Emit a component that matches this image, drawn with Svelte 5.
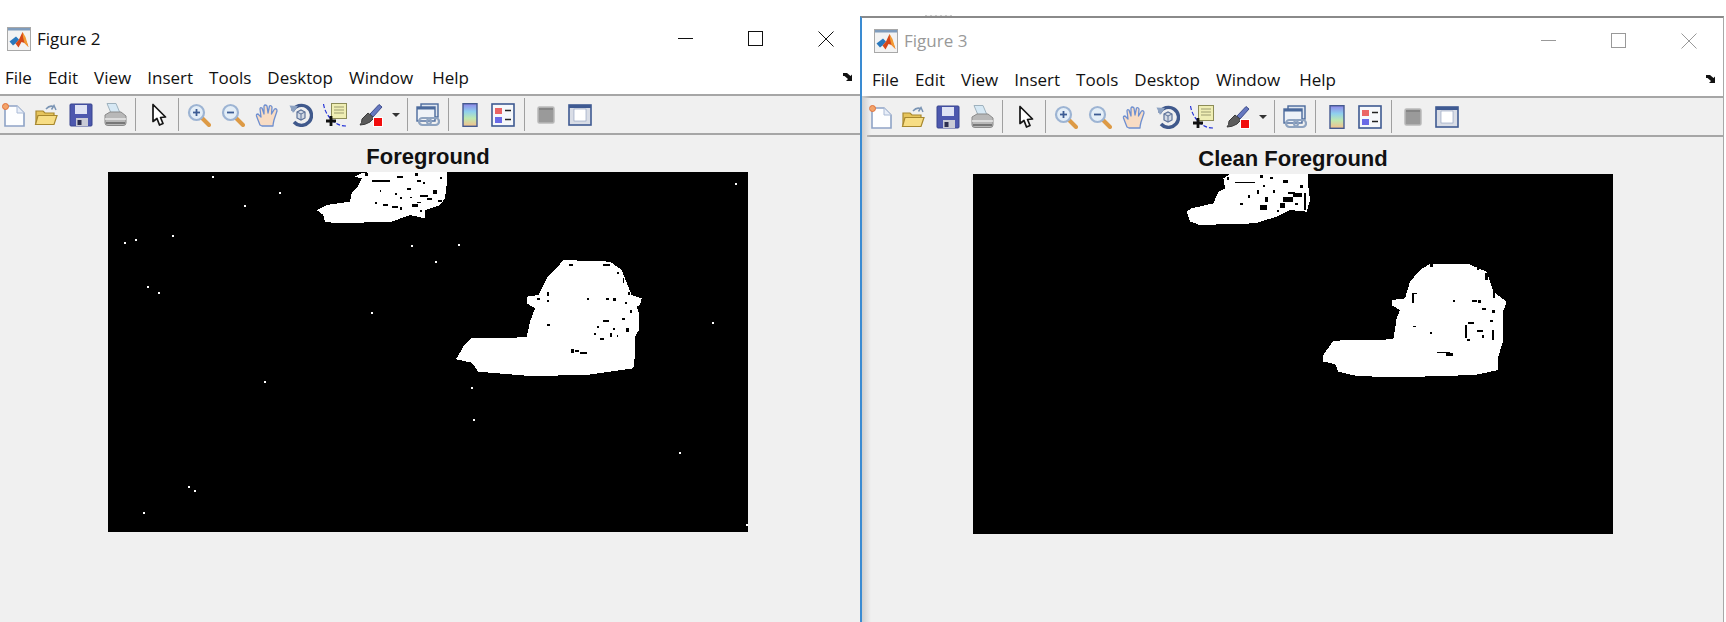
<script lang="ts">
// Two MATLAB figure windows side by side. Masks are traced from 3x crops,
// so `traced` brings crop coordinates back to the 640x360 plot.
type Box = number[];

const menus = ["File", "Edit", "View", "Insert", "Tools", "Desktop", "Window", "Help"];

const tools = [
  { icon: "new", w: 28 },
  { icon: "open", w: 36 },
  { icon: "save", w: 34 },
  { icon: "print", w: 34 },
  { sep: [3, 6] },
  { icon: "pointer", w: 34 },
  { sep: [2, 3] },
  { icon: "zoomIn", w: 34 },
  { icon: "zoomOut", w: 34 },
  { icon: "hand", w: 34 },
  { icon: "rotate", w: 34 },
  { icon: "cursor", w: 34 },
  { icon: "brush", w: 38 },
  { icon: "drop", w: 12 },
  { sep: [5, 4] },
  { icon: "link", w: 32 },
  { sep: [4, 4] },
  { icon: "colorbar", w: 34 },
  { icon: "legend", w: 32 },
  { sep: [5, 4] },
  { icon: "gray", w: 34 },
  { icon: "frame", w: 34 },
];

function points(pts: number[], ox: number, oy: number) {
  let out = [];
  for (let i = 0; i < pts.length; i += 2) {
    out.push(`${ox + pts[i] / 3},${oy + pts[i + 1] / 3}`);
  }
  return out.join(" ");
}

function traced(holes: Box[], ox: number, oy: number) {
  return holes.map(([x, y, w, h]) => ({ x: ox + x / 3, y: oy + y / 3, w: w / 3, h: h / 3 }));
}

const firstMask = {
  blobs: [
    points([165,35,185,25,210,21,440,21,440,60,435,100,420,120,375,135,375,160,330,150,275,170,110,175,75,170,70,150,50,135,80,120,150,110,155,85,170,70,185,40], 192, -7),
    points([370,30,510,35,545,60,565,110,575,135,605,145,600,165,590,170,597,190,597,240,585,260,585,315,580,355,440,375,270,378,115,365,95,338,48,328,70,290,95,265,260,262,270,215,285,175,260,160,260,140,295,135,320,85,345,60], 332, 78),
  ],
  holes: [
    ...traced([[215,45,55,5],[290,33,20,5],[345,25,8,8],[195,25,10,8],[350,45,12,6],[320,70,12,6],[360,90,25,6],[380,100,15,5],[400,75,10,12],[250,118,15,6],[275,122,20,8],[335,118,20,8],[300,95,6,6],[225,112,6,6],[240,75,4,6],[370,50,6,6],[420,35,6,6],[415,105,10,5],[300,125,6,10],[360,135,6,5],[285,85,5,5],[330,95,5,5],[350,110,12,5]], 192, -7),
    ...traced([[388,42,10,6],[490,42,20,6],[530,65,8,6],[548,85,4,14],[320,125,8,14],[290,145,10,5],[320,150,8,6],[440,143,8,8],[498,145,10,5],[520,145,8,8],[556,155,6,8],[490,210,18,6],[320,222,10,6],[470,228,8,6],[518,235,8,6],[558,235,10,10],[462,250,6,6],[480,265,12,4],[510,250,5,10],[530,255,5,5],[392,298,10,10],[405,300,12,5],[420,305,20,8],[570,180,6,10],[545,205,10,5],[565,125,5,10]], 332, 78),
  ],
  // stray foreground pixels, only the unfiltered mask has them
  specks: [[104,4],[136,33],[171,20],[627,11],[16,70],[27,67],[64,63],[39,114],[50,120],[263,140],[156,209],[365,247],[363,215],[571,280],[80,314],[86,318],[35,340],[638,352],[604,150],[303,73],[327,89],[350,72]],
};

const secondMask = {
  blobs: [
    points([130,25,150,12,385,12,385,50,390,90,380,125,330,120,290,140,225,160,60,165,30,155,20,125,35,115,100,100,115,65,135,55], 207, -4),
    points([360,42,475,42,530,65,550,125,590,155,585,170,578,185,580,270,565,320,565,360,495,375,260,382,140,378,85,365,75,342,40,335,40,315,70,272,250,268,260,205,270,180,245,165,245,150,285,145,300,95,330,60], 337, 76),
  ],
  holes: [
    ...traced([[165,35,60,5],[240,15,10,10],[270,20,10,8],[310,30,15,8],[310,80,30,15],[340,70,25,12],[325,65,20,8],[360,45,8,10],[372,70,6,50],[300,100,15,15],[345,100,10,5],[240,105,20,15],[180,100,10,6],[230,60,6,12],[255,80,8,15],[280,60,6,10],[205,75,5,10],[290,120,6,6],[250,45,6,6],[140,22,8,8]], 207, -4),
    ...traced([[305,130,6,30],[310,128,10,5],[430,150,5,5],[485,150,15,6],[505,150,8,8],[515,175,12,6],[475,215,18,6],[545,180,10,10],[540,210,10,5],[525,70,8,20],[310,228,8,4],[360,245,6,6],[465,225,6,40],[500,240,20,5],[545,240,6,30],[515,255,6,10],[470,268,10,5],[380,305,40,5],[408,310,20,8],[550,125,5,20],[500,55,6,6],[360,42,8,8]], 337, 76),
  ],
  specks: [],
};

const windows = [
  { name: "Figure 2", title: "Foreground", mask: firstMask, inactive: false },
  { name: "Figure 3", title: "Clean Foreground", mask: secondMask, inactive: true },
];
</script>

{#snippet logo()}
  <svg class="logo" viewBox="0 0 24 24" aria-hidden="true">
    <rect x="0.5" y="0.5" width="23" height="23" fill="#f3f3f3" stroke="#a8a8a8" />
    <rect x="1" y="1" width="22" height="2.5" fill="#7f9cbc" />
    <path d="M2.5 14.5 L9 9.5 L12 12.5 L8.5 16.5 L6 18.5 Z" fill="#2a78bd" />
    <path d="M8.5 16.5 L12 12.5 L15.5 5 L18 11 L21.5 20 L17.5 16 L14.5 15 L11.5 20.5 Z" fill="#d5481a" />
    <path d="M15.5 5 L18.5 10 L21.5 20 L17.5 16 L16 10 Z" fill="#f39a33" />
  </svg>
{/snippet}

{#snippet icon(name)}
  <svg class="icon" viewBox="0 0 24 24" aria-hidden="true">
    {#if name === "new"}
      <path d="M3 3 H15 L22 10 V23 H3 Z" fill="#fdfeff" stroke="#8ea3c6" stroke-width="1.6" />
      <path d="M15 3 V10 H22" fill="#e8eef8" stroke="#a9bad6" />
      <circle cx="3.5" cy="3.5" r="3" fill="#f3a46a" stroke="#e0713a" />
    {:else if name === "open"}
      <path d="M2 20 V8 H9 L11 10 H20 V13" fill="#e6c45c" stroke="#a8882e" stroke-width="1.2" />
      <path d="M1.5 21.5 L4 12.5 H23 L20 21.5 Z" fill="#f7dd84" stroke="#a8882e" stroke-width="1.2" />
      <path d="M12 6 Q16 1.5 20 4 M22 7 L20 2.5 L17.5 6.5" fill="none" stroke="#7a94b4" stroke-width="1.5" />
    {:else if name === "save"}
      <rect x="1" y="1" width="22" height="22" rx="1" fill="#4d58ae" stroke="#39458f" />
      <rect x="6" y="2" width="12" height="9" fill="#dfe3f4" />
      <rect x="7" y="15" width="12" height="8" fill="#c9cbd6" />
      <rect x="8.5" y="17" width="4" height="5" fill="#2c2f50" />
    {:else if name === "print"}
      <path d="M4 0.5 H13 L17 10 H8 Z" fill="#d6e8f4" stroke="#9eb1bd" />
      <path d="M2 12 L7 9 H18 L23 13 V20 Q23 22.5 20 22.5 H5 Q2 22.5 2 20 Z" fill="#b8b8b8" stroke="#8a8a8a" />
      <path d="M2 16 H23" stroke="#ececec" stroke-width="1.4" />
      <path d="M3 20 H22" stroke="#787878" stroke-width="2" />
    {:else if name === "pointer"}
      <path d="M6 1.5 V18.5 L10 15.5 L12.5 22 L16 20.5 L13.5 14.5 L18.5 14 Z" fill="#fff" stroke="#151515" stroke-width="1.7" stroke-linejoin="round" />
    {:else if name === "zoomIn" || name === "zoomOut"}
      <path d="M14.5 14.5 L22 22" stroke="#dd9a45" stroke-width="4" stroke-linecap="round" />
      <circle cx="9.5" cy="9.5" r="7.5" fill="#e4eef7" stroke="#9db4d3" stroke-width="2.2" />
      <path d="M6 9.5 H13" stroke="#3d5c94" stroke-width="1.8" />
      {#if name === "zoomIn"}
        <path d="M9.5 6 V13" stroke="#3d5c94" stroke-width="1.8" />
      {/if}
    {:else if name === "hand"}
      <path d="M5 22 Q3 17 1.5 13 Q1 11 3 11 L6 14 L5 6 Q5 4 7 5 L9 11 L9 3 Q10 1 12 3 L13 10 L14.5 3 Q16 2 17 4 L16.5 11 L19.5 6 Q22 5 22 8 L19 17 Q18 21 18 23 H7 Z" fill="#f8dcc4" stroke="#6e8fd0" stroke-width="1.3" stroke-linejoin="round" />
    {:else if name === "rotate"}
      <path d="M3.5 8 A10 10 0 1 1 5 19" fill="none" stroke="#40598c" stroke-width="3.4" />
      <path d="M0.5 2.5 L9 3 L4 10 Z" fill="#8da2c2" />
      <path d="M8 9 L12 7 L16 9 V15 L12 17 L8 15 Z" fill="#d4dbe6" stroke="#5d7299" stroke-width="1.2" />
      <path d="M8 9 L12 11 L16 9 M12 11 V17" fill="none" stroke="#5d7299" />
    {:else if name === "cursor"}
      <rect x="8.5" y="0.5" width="15" height="15" fill="#efeeb4" stroke="#8c8c58" />
      <path d="M11 4 H21 M11 7 H21 M11 10 H21" stroke="#9c9c70" />
      <path d="M0.5 1 Q2 10 8 16 Q14 23 23 23" fill="none" stroke="#2433d8" stroke-width="1.2" stroke-dasharray="4 2" />
      <path d="M8 13 V23 M3 18 H13" stroke="#111" stroke-width="2.8" />
    {:else if name === "brush"}
      <path d="M11 11 L20 1.5 L23 4 L14 14 Z" fill="#6678bf" stroke="#3d4c8c" />
      <path d="M9 10 L15 15 L11 19 Q6 22 1 22 Q3 20 3 16 Z" fill="#5b5b5b" stroke="#3a3a3a" />
      <rect x="14.5" y="14.5" width="9" height="9" fill="#f20d0d" stroke="#fff" />
    {:else if name === "drop"}
      <path d="M8 10 H16 L12 14 Z" fill="#333" />
    {:else if name === "link"}
      <rect x="5" y="1" width="17" height="13" fill="#dfe6f0" stroke="#4b6a9c" stroke-width="1.4" />
      <rect x="1" y="4" width="18" height="14" fill="#eef2f8" stroke="#4b6a9c" stroke-width="1.4" />
      <rect x="1" y="4" width="18" height="2.5" fill="#4b6a9c" />
      <rect x="3" y="15" width="12" height="7" rx="3.5" fill="none" stroke="#8ea3c0" stroke-width="2.2" />
      <rect x="11" y="15" width="12" height="7" rx="3.5" fill="none" stroke="#8ea3c0" stroke-width="2.2" />
    {:else if name === "colorbar"}
      <defs>
        <linearGradient id="bar" x1="0" y1="0" x2="0" y2="1">
          <stop offset="0" stop-color="#8f86e8" />
          <stop offset="0.35" stop-color="#8fd0ee" />
          <stop offset="0.65" stop-color="#bfe8b0" />
          <stop offset="1" stop-color="#f4bf8c" />
        </linearGradient>
      </defs>
      <rect x="5" y="0.7" width="14" height="22.6" fill="url(#bar)" stroke="#44598f" stroke-width="1.4" />
    {:else if name === "legend"}
      <rect x="1" y="1" width="22" height="22" fill="#f6f8fb" stroke="#3f5a92" stroke-width="1.6" />
      <rect x="4" y="5" width="7" height="6" fill="#ea6464" />
      <rect x="4" y="14" width="7" height="6" fill="#6a6ae6" />
      <path d="M14 7.5 H20 M14 16.5 H20" stroke="#222" stroke-width="1.6" />
    {:else if name === "gray"}
      <rect x="4" y="4" width="16" height="16" rx="1.5" fill="#9a9a9a" stroke="#b9b9b9" stroke-width="1.5" />
      <path d="M5 6 H19" stroke="#858585" stroke-width="2" />
    {:else if name === "frame"}
      <rect x="1" y="2" width="22" height="20" fill="#d9dde6" stroke="#3f5a92" stroke-width="1.6" />
      <rect x="1" y="2" width="22" height="3" fill="#3f5a92" />
      <rect x="6" y="6" width="12" height="12" fill="#fff" stroke="#8a9abb" stroke-width="0.6" />
    {/if}
  </svg>
{/snippet}

<main class="desktop">
  {#each windows as win (win.name)}
    <section class="window" class:inactive={win.inactive}>
      <header class="titlebar">
        {@render logo()}
        <span class="name">{win.name}</span>
        <div class="controls">
          <svg viewBox="0 0 16 16"><path d="M0 7.5 H15" /></svg>
          <svg viewBox="0 0 16 16"><rect x="0.5" y="0.5" width="14" height="14" /></svg>
          <svg viewBox="0 0 16 16"><path d="M0.5 0.5 L15.5 15.5 M15.5 0.5 L0.5 15.5" /></svg>
        </div>
      </header>

      <nav class="menubar">
        {#each menus as item}
          <span>{item}</span>
        {/each}
        <svg class="dock" viewBox="0 0 10 8" aria-hidden="true">
          <path d="M0 0 H4 L7.5 3 L9 1.5 V8 H3 L5 6 L1.5 3 H0 Z" fill="#111" />
        </svg>
      </nav>

      <div class="toolbar">
        {#each tools as tool}
          {#if tool.sep}
            <i class="sep" style="margin: 0 {tool.sep[1]}px 0 {tool.sep[0]}px"></i>
          {:else}
            <span class="tool" style="width: {tool.w}px">{@render icon(tool.icon)}</span>
          {/if}
        {/each}
      </div>

      <div class="canvas">
        <h2>{win.title}</h2>
        <svg class="plot" viewBox="0 0 640 360" shape-rendering="crispEdges" role="img" aria-label={win.title}>
          <rect width="640" height="360" fill="#000" />
          {#each win.mask.blobs as blob}
            <polygon points={blob} fill="#fff" />
          {/each}
          {#each win.mask.holes as h}
            <rect x={h.x} y={h.y} width={h.w} height={h.h} fill="#000" />
          {/each}
          {#each win.mask.specks as [x, y]}
            <rect {x} {y} width="2" height="2" fill="#fff" />
          {/each}
        </svg>
      </div>
    </section>
  {/each}
  <i class="behind"></i>
</main>

<style>
:global(body) {
  margin: 0;
  background: #fff;
}

.desktop {
  position: relative;
  display: flex;
  width: 1726px;
  height: 622px;
  overflow: hidden;
  background: #fff;
  font-family: "Open Sans", "Noto Sans", sans-serif;
  color: #111;
}

.window {
  position: relative;
  display: flex;
  flex-direction: column;
  box-sizing: border-box;
  width: 860px;
  margin-top: 16px;
  background: #f0f0f0;
}
.window.inactive {
  width: 864px;
  padding-left: 5px;
  border-left: 2px solid #3a8bd2;
  border-top: 2px solid #8a8a8a;
  border-right: 1px solid #a8a8a8;
}
/* shadow the front window throws to its left */
.window.inactive::before {
  content: "";
  position: absolute;
  top: 78px;
  bottom: 0;
  left: 0;
  width: 9px;
  background: linear-gradient(90deg, #cfcfcf, rgba(240, 240, 240, 0));
}
.window.inactive .titlebar {
  margin-left: -5px;
  padding-left: 12px;
}
.window.inactive .menubar {
  margin-left: -5px;
  padding-left: 10px;
}

.titlebar {
  display: flex;
  align-items: center;
  gap: 6px;
  height: 46px;
  box-sizing: border-box;
  padding: 0 26px 0 7px;
  background: #fff;
}
.logo {
  width: 24px;
  height: 24px;
  flex: none;
}
.name {
  font-size: 17px;
  line-height: 46px;
}
.inactive .name {
  color: #999;
}
.controls {
  display: flex;
  gap: 54px;
  margin-left: auto;
}
.controls svg {
  width: 16px;
  height: 16px;
  fill: none;
  stroke: #111;
  stroke-width: 1;
}
.inactive .controls svg {
  stroke: #999;
}

.menubar {
  display: flex;
  align-items: center;
  gap: 16px;
  height: 34px;
  box-sizing: border-box;
  padding: 0 7px 2px 5px;
  background: #fff;
  font-size: 17px;
  border-bottom: 2px solid #a6a6a6;
}
/* Segoe's "Window" runs wider than this font's */
.menubar span:last-of-type {
  margin-left: 3px;
}
.dock {
  width: 10px;
  height: 8px;
  margin-left: auto;
}

.toolbar {
  display: flex;
  align-items: center;
  height: 39px;
  box-sizing: border-box;
  border-bottom: 2px solid #a6a6a6;
}
.tool {
  display: flex;
  justify-content: center;
}
.icon {
  width: 24px;
  height: 24px;
  flex: none;
}
.sep {
  width: 1px;
  height: 33px;
  background: #a0a0a0;
}

.canvas {
  padding-left: 108px;
}
.inactive .canvas {
  padding-left: 106px;
}
.canvas h2 {
  width: 640px;
  height: 37px;
  margin: 0;
  font: bold 22px/44px "Liberation Sans", Arial, sans-serif;
  text-align: center;
  color: #111;
}
.plot {
  display: block;
  width: 640px;
  height: 360px;
}

/* sliver of a window hidden behind, showing over the top edge */
.behind {
  position: absolute;
  top: 15px;
  left: 925px;
  width: 27px;
  height: 1px;
  background: repeating-linear-gradient(90deg, #ccc 0 2px, #f2f2f2 2px 5px);
}
</style>
